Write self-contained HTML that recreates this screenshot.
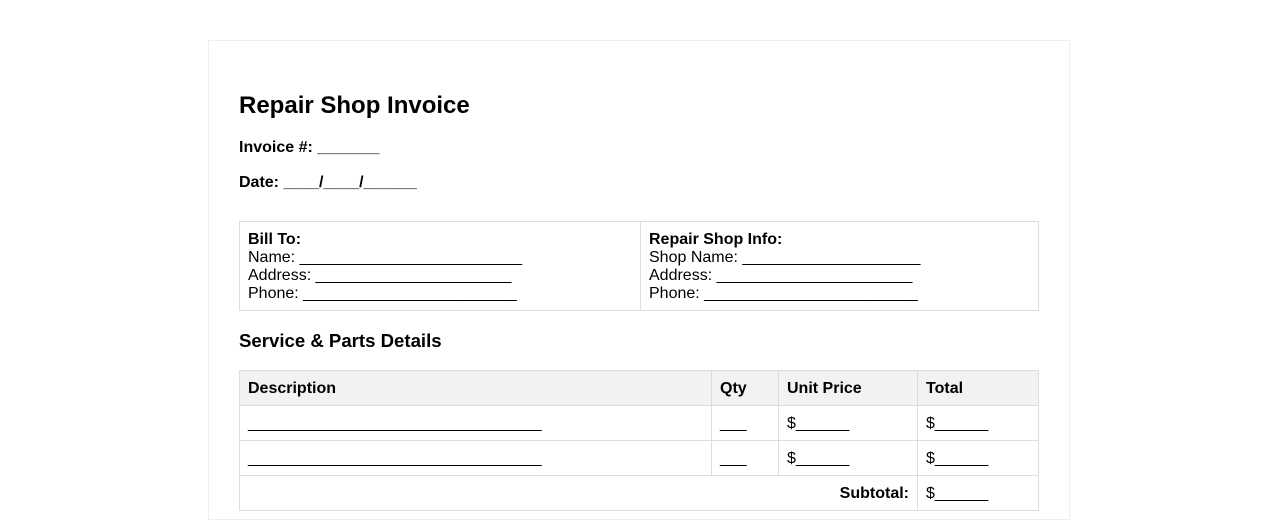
<!DOCTYPE html>
<html><head><style>
body{margin:0;background:#fff;font-family:"Liberation Sans",Arial,sans-serif;color:#000;}
.page{position:absolute;left:208px;top:40px;width:862px;height:480px;border:1px solid #eee;box-sizing:border-box;}
.abs{position:absolute;white-space:nowrap;}
h1{position:absolute;left:30px;top:51px;margin:0;font-size:24px;font-weight:bold;}
.b{font-weight:bold;font-size:16px;}
table{border-collapse:collapse;position:absolute;}
td,th{border:1px solid #ddd;font-size:16px;text-align:left;vertical-align:top;padding:0 8px;}
.info td{padding:9px 8px 7px;line-height:18px;}
.items th{background:#f2f2f2;height:32px;vertical-align:middle;padding-top:2px;padding-bottom:0;}
.items td{height:32px;vertical-align:middle;padding-top:2px;padding-bottom:0;}
</style></head><body>
<div class="page">
<h1>Repair Shop Invoice</h1>
<div class="abs b" style="left:30px;top:98px">Invoice #: _______</div>
<div class="abs b" style="left:30px;top:133px">Date: ____/____/______</div>
<table class="info" style="left:30px;top:180px;width:800px">
<tr><td style="width:384px"><b>Bill To:</b><br>Name: _________________________<br>Address: ______________________<br>Phone: ________________________</td>
<td><b>Repair Shop Info:</b><br>Shop Name: ____________________<br>Address: ______________________<br>Phone: ________________________</td></tr></table>
<div class="abs" style="left:30px;top:289px;font-size:18.6px;font-weight:bold">Service &amp; Parts Details</div>
<table class="items" style="left:30px;top:329px;width:800px">
<tr><th style="width:455px">Description</th><th style="width:50px">Qty</th><th style="width:122px">Unit Price</th><th>Total</th></tr>
<tr><td>_________________________________</td><td>___</td><td>$______</td><td>$______</td></tr>
<tr><td>_________________________________</td><td>___</td><td>$______</td><td>$______</td></tr>
<tr><td colspan="3" style="text-align:right;font-weight:bold">Subtotal:</td><td>$______</td></tr>
</table>
</div>
</body></html>
